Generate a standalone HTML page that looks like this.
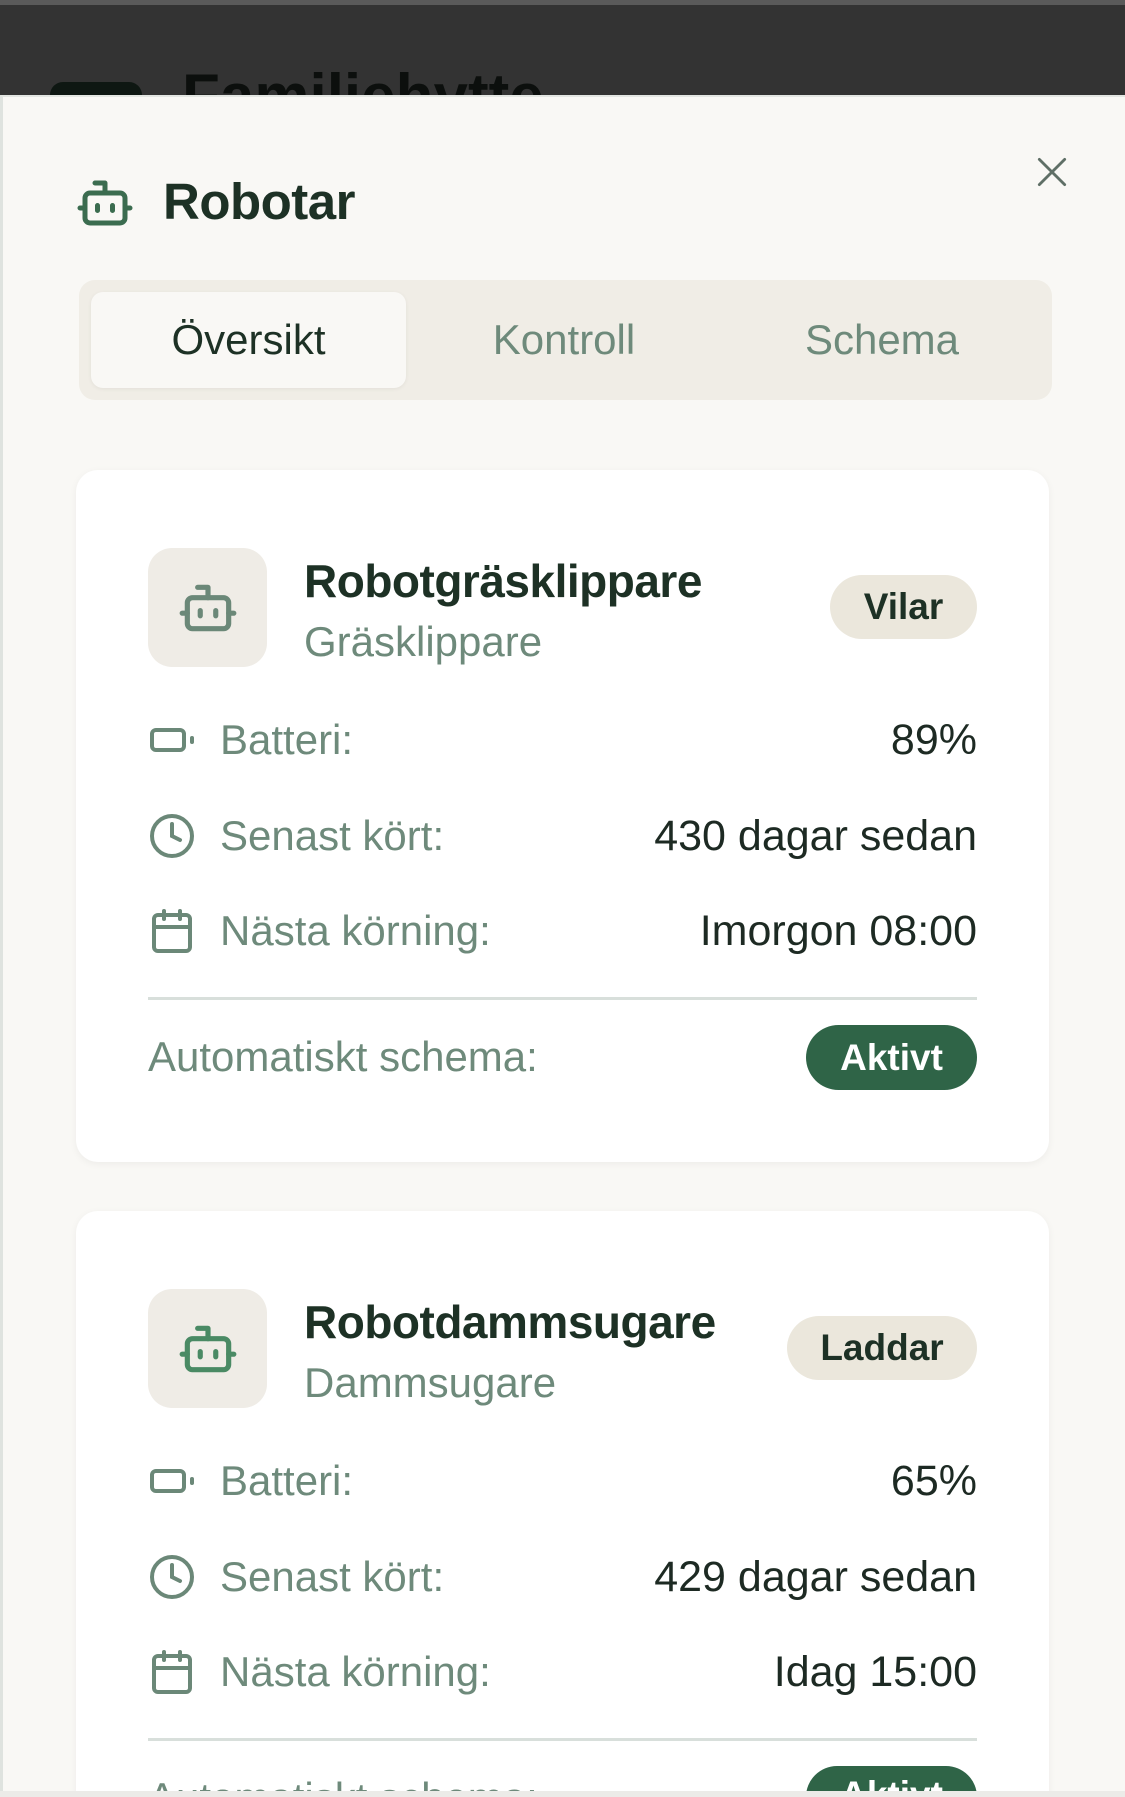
<!DOCTYPE html>
<html style="width:1125px;height:1797px;overflow:hidden"><head><meta charset="utf-8"><style>
*{margin:0;padding:0;box-sizing:border-box}
body{width:1125px;height:1797px;overflow:hidden;background:#333;font-family:"Liberation Sans",sans-serif;position:relative}
#wrap{position:absolute;left:0;top:0;width:1125px;height:1797px;overflow:hidden}
.abs{position:absolute}
.sheet{position:absolute;left:0;top:95px;width:1125px;height:1702px;background:#f9f8f5;border-left:3px solid #dfe3df;border-top:2px solid #e3e6e2}
.card{position:absolute;left:76px;width:973px;height:692px;background:#fff;border-radius:22px;box-shadow:0 2px 8px rgba(0,0,0,0.05);overflow:hidden}
.ibox{position:absolute;left:72px;top:78px;width:119px;height:119px;background:#efece6;border-radius:24px;display:flex;align-items:center;justify-content:center}
.name{position:absolute;left:228px;top:84px;font-size:46px;font-weight:bold;color:#1d3125;letter-spacing:-0.5px}
.sub{position:absolute;left:228px;top:148px;font-size:42px;color:#6e8a7b}
.badge{position:absolute;right:72px;top:105px;height:64px;border-radius:32px;background:#ebe7dc;color:#1d3125;font-size:37px;font-weight:bold;display:flex;align-items:center;justify-content:center}
.row{position:absolute;left:72px;right:72px;height:60px;display:flex;align-items:center;font-size:42px}
.row svg{width:48px;height:48px;margin-right:24px;flex:none}
.row .l{color:#6e8a7b;flex:1}
.row .v{color:#1d2a23;font-size:43px}
.div{position:absolute;left:72px;right:72px;top:527px;height:3px;background:#d8dfdb}
.auto{position:absolute;left:72px;top:563px;font-size:42px;color:#6e8a7b;line-height:48px}
.act{position:absolute;right:72px;top:555px;width:171px;height:65px;border-radius:33px;background:#2f6447;color:#fff;font-size:37px;font-weight:bold;display:flex;align-items:center;justify-content:center}
</style></head><body><div id="wrap">
<div class="abs" style="left:0;top:0;width:1125px;height:5px;background:#5a5a5a"></div>
<div class="abs" style="left:50px;top:82px;width:92px;height:13px;background:#0e1712;border-radius:22px 22px 0 0"></div>
<div class="abs" style="left:182px;top:62px;width:600px;height:33px;overflow:hidden"><div style="font-size:62px;font-weight:bold;color:#0c0f0d;line-height:70px">Familiehytte</div></div>
<div class="sheet">
<svg class="abs" style="left:1030px;top:56px" width="38" height="38" viewBox="0 0 24 24" fill="none" stroke="#5f6f66" stroke-width="1.8" stroke-linecap="round"><path d="M4 4l16 16M20 4L4 20"/></svg>
<svg class="abs" style="left:72px;top:76px" width="60" height="60" viewBox="0 0 24 24" fill="none" stroke="#3b6c4f" stroke-width="2" stroke-linecap="round" stroke-linejoin="round"><path d="M12 8V4H8"/><rect x="4" y="8" width="16" height="12" rx="2"/><path d="M2 14h2M20 14h2M15 13v2M9 13v2"/></svg>
<div class="abs" style="left:160px;top:75px;font-size:51px;font-weight:bold;color:#1d3125;line-height:60px;letter-spacing:-0.5px">Robotar</div>
<div class="abs" style="left:76px;top:183px;width:973px;height:120px;background:#f0ede6;border-radius:16px"></div>
<div class="abs" style="left:88px;top:195px;width:315px;height:96px;background:#f9f8f5;border-radius:12px;box-shadow:0 1px 4px rgba(0,0,0,0.06)"></div>
<div class="abs" style="left:88px;top:195px;width:315px;height:96px;line-height:96px;text-align:center;font-size:42px;color:#1d3125">Översikt</div>
<div class="abs" style="left:403px;top:195px;width:316px;height:96px;line-height:96px;text-align:center;font-size:42px;color:#6e8a7b">Kontroll</div>
<div class="abs" style="left:719px;top:195px;width:320px;height:96px;line-height:96px;text-align:center;font-size:42px;color:#6e8a7b">Schema</div>
</div>

<div class="card" style="top:470px">
<div class="ibox"><svg width="62" height="62" viewBox="0 0 24 24" fill="none" stroke="#6b8878" stroke-width="2" stroke-linecap="round" stroke-linejoin="round"><path d="M12 8V4H8"/><rect x="4" y="8" width="16" height="12" rx="2"/><path d="M2 14h2M20 14h2M15 13v2M9 13v2"/></svg></div>
<div class="name">Robotgräsklippare</div>
<div class="sub">Gräsklippare</div>
<div class="badge" style="width:147px">Vilar</div>
<div class="row" style="top:240px"><svg viewBox="0 0 24 24" fill="none" stroke="#6b8878" stroke-width="2" stroke-linecap="round"><rect x="2" y="7" width="16" height="10" rx="2"/><path d="M22 11v2"/></svg><span class="l">Batteri:</span><span class="v">89%</span></div>
<div class="row" style="top:336px"><svg viewBox="0 0 24 24" fill="none" stroke="#6b8878" stroke-width="2" stroke-linecap="round"><circle cx="12" cy="12" r="10"/><path d="M12 6v6l4 2"/></svg><span class="l">Senast kört:</span><span class="v">430 dagar sedan</span></div>
<div class="row" style="top:431px"><svg viewBox="0 0 24 24" fill="none" stroke="#6b8878" stroke-width="2" stroke-linecap="round"><rect x="3" y="4" width="18" height="18" rx="2"/><path d="M16 2v4M8 2v4M3 10h18"/></svg><span class="l">Nästa körning:</span><span class="v">Imorgon 08:00</span></div>
<div class="div"></div>
<div class="auto">Automatiskt schema:</div>
<div class="act">Aktivt</div>
</div>

<div class="card" style="top:1211px;height:586px;border-radius:22px 22px 0 0">
<div class="ibox"><svg width="62" height="62" viewBox="0 0 24 24" fill="none" stroke="#4a8a64" stroke-width="2" stroke-linecap="round" stroke-linejoin="round"><path d="M12 8V4H8"/><rect x="4" y="8" width="16" height="12" rx="2"/><path d="M2 14h2M20 14h2M15 13v2M9 13v2"/></svg></div>
<div class="name">Robotdammsugare</div>
<div class="sub">Dammsugare</div>
<div class="badge" style="width:190px">Laddar</div>
<div class="row" style="top:240px"><svg viewBox="0 0 24 24" fill="none" stroke="#6b8878" stroke-width="2" stroke-linecap="round"><rect x="2" y="7" width="16" height="10" rx="2"/><path d="M22 11v2"/></svg><span class="l">Batteri:</span><span class="v">65%</span></div>
<div class="row" style="top:336px"><svg viewBox="0 0 24 24" fill="none" stroke="#6b8878" stroke-width="2" stroke-linecap="round"><circle cx="12" cy="12" r="10"/><path d="M12 6v6l4 2"/></svg><span class="l">Senast kört:</span><span class="v">429 dagar sedan</span></div>
<div class="row" style="top:431px"><svg viewBox="0 0 24 24" fill="none" stroke="#6b8878" stroke-width="2" stroke-linecap="round"><rect x="3" y="4" width="18" height="18" rx="2"/><path d="M16 2v4M8 2v4M3 10h18"/></svg><span class="l">Nästa körning:</span><span class="v">Idag 15:00</span></div>
<div class="div"></div>
<div class="auto" style="height:23px;overflow:hidden">Automatiskt schema:</div>
<div class="act" style="height:31px;border-radius:33px 33px 0 0;align-items:flex-start;padding-top:8px;overflow:hidden">Aktivt</div>
</div>
<div class="abs" style="left:0;top:1791px;width:1125px;height:6px;background:#ecebe8"></div>
</div></body></html>
